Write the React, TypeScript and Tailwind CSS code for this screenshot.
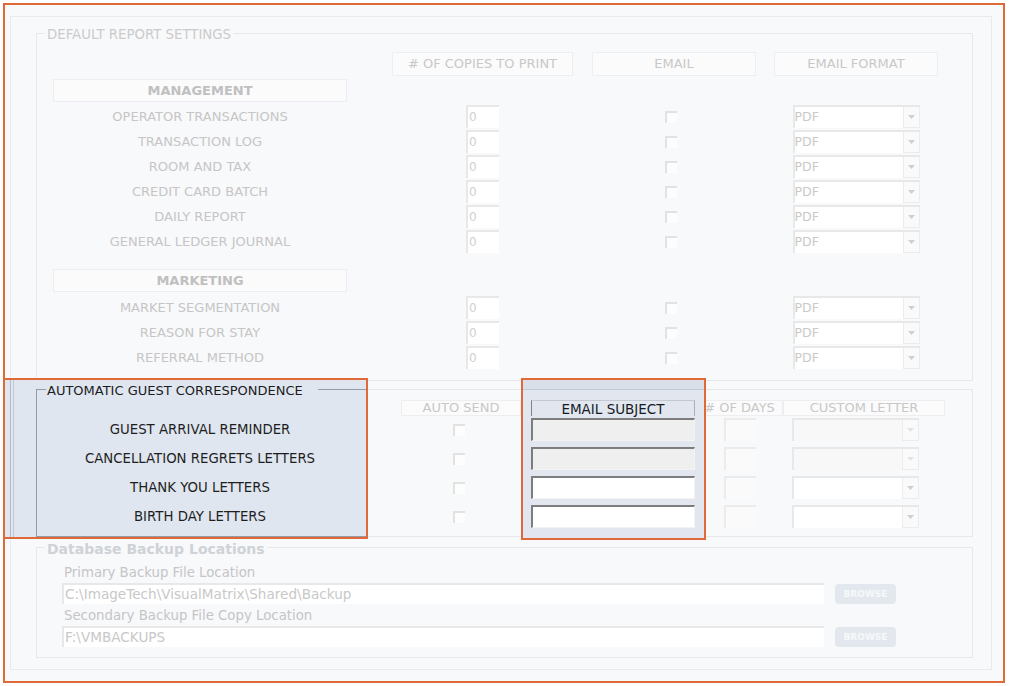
import React from 'react';

const management = [
  'OPERATOR TRANSACTIONS',
  'TRANSACTION LOG',
  'ROOM AND TAX',
  'CREDIT CARD BATCH',
  'DAILY REPORT',
  'GENERAL LEDGER JOURNAL',
];
const marketing = ['MARKET SEGMENTATION', 'REASON FOR STAY', 'REFERRAL METHOD'];
const letters = [
  { label: 'GUEST ARRIVAL REMINDER', disabled: true },
  { label: 'CANCELLATION REGRETS LETTERS', disabled: true },
  { label: 'THANK YOU LETTERS', disabled: false },
  { label: 'BIRTH DAY LETTERS', disabled: false },
];

const Arrow = ({ color }: { color: string }) => (
  <svg width="7" height="4" viewBox="0 0 7 4">
    <path d="M0 0h7L3.5 4z" fill={color} />
  </svg>
);

const FadedCheck = () => <div className="w-[12px] h-[12px] border-t-2 border-l-2 border-[#e2e2e2] bg-[#fdfdfd]" />;

const NumBox = ({ value }: { value?: string }) => (
  <div className="w-[33px] h-[23px] bg-white border-t-2 border-l-2 border-[#e8e8e8] pl-[1px] text-[12px] leading-[20px] text-[#d0d0d0]">
    {value}
  </div>
);

const FadedSelect = ({ value, disabled }: { value?: string; disabled?: boolean }) => (
  <div
    className={`w-[127px] h-[23px] flex border-t-2 border-l-2 border-[#e8e8e8] ${disabled ? 'bg-[#f8f8f8]' : 'bg-white'}`}
  >
    <span className="flex-1 text-[12.5px] leading-[20px] text-[#c9c9c9]">{value}</span>
    <span className="w-[17px] flex items-center justify-center border-l border-r border-b border-[#ececec] bg-[#fafafa]">
      <Arrow color={disabled ? '#e3e3e3' : '#cfcfcf'} />
    </span>
  </div>
);

const ColHeader = ({ className, children }: { className: string; children: React.ReactNode }) => (
  <div className={`flex items-center justify-center border border-[#eceef1] bg-[#fbfbfc] text-[#c8c8c8] ${className}`}>
    {children}
  </div>
);

const ReportRow = ({ label }: { label: string }) => (
  <div className="flex h-[23px] items-center">
    <div className="w-[294px] text-center text-[#c6c6c6]">{label}</div>
    <div className="ml-[45px] w-[181px] flex justify-center">
      <NumBox value="0" />
    </div>
    <div className="ml-[19px] w-[164px] flex justify-center pr-[6px]">
      <FadedCheck />
    </div>
    <div className="ml-[18px] w-[164px] flex justify-center">
      <FadedSelect value="PDF" />
    </div>
  </div>
);

const Legend = ({ className, children }: { className: string; children: React.ReactNode }) => (
  <div className={`-mt-[7px] ml-[8px] px-[2px] w-fit h-[16px] leading-4 ${className}`}>{children}</div>
);

export default function App() {
  return (
    <div className="relative w-[1009px] h-[686px] bg-white overflow-hidden font-['DejaVu_Sans',sans-serif] text-[13px] leading-4">
      <div className="ml-[3px] mt-[3px] w-[1002px] h-[680px] border-2 border-[#e0693a] bg-[#f8f9fb]">
        <div className="ml-[5px] mt-[11px] w-[982px] h-[654px] border border-[#e8eaed] pl-[25px] pt-[16px]">
          {/* default report settings */}
          <div className="w-[937px] h-[348px] border border-[#e6e8eb]">
            <Legend className="bg-[#f8f9fb] text-[13.3px] text-[#cbcbcb]">DEFAULT REPORT SETTINGS</Legend>
            <div className="pl-[16px]">
              <div className="flex mt-[9px] h-[24px]">
                <div className="w-[294px]" />
                <ColHeader className="ml-[45px] w-[181px]"># OF COPIES TO PRINT</ColHeader>
                <ColHeader className="ml-[19px] w-[164px]">EMAIL</ColHeader>
                <ColHeader className="ml-[18px] w-[164px]">EMAIL FORMAT</ColHeader>
              </div>
              <ColHeader className="mt-[3px] w-[294px] h-[23px] font-bold !text-[#c0c0c0]">MANAGEMENT</ColHeader>
              <div className="mt-[3px] flex flex-col gap-[2px]">
                {management.map((m) => (
                  <ReportRow key={m} label={m} />
                ))}
              </div>
              <ColHeader className="mt-[16px] w-[294px] h-[23px] font-bold !text-[#c0c0c0]">MARKETING</ColHeader>
              <div className="mt-[4px] flex flex-col gap-[2px]">
                {marketing.map((m) => (
                  <ReportRow key={m} label={m} />
                ))}
              </div>
            </div>
          </div>

          {/* automatic guest correspondence */}
          <div className="mt-[8px] w-[937px] h-[148px] border border-[#e6e8eb]">
            <Legend className="relative z-[2] text-[13px] text-[#1c1c1c]">AUTOMATIC GUEST CORRESPONDENCE</Legend>
            <div className="pl-[16px]">
              <div className="flex mt-[1px] h-[16px]">
                <div className="w-[294px]" />
                <ColHeader className="ml-[54px] w-[120px]">AUTO SEND</ColHeader>
                <div className="relative z-[2] ml-[10px] w-[164px] flex items-center justify-center border-l border-l-[#7f848c] border-t border-t-[#c3c9d2] border-r border-r-[#a9afb8] text-[13.5px] text-[#161a28]">
                  EMAIL SUBJECT
                </div>
                <ColHeader className="ml-[1px] w-[87px]"># OF DAYS</ColHeader>
                <ColHeader className="w-[162px]">CUSTOM LETTER</ColHeader>
              </div>
              <div className="mt-[2px] flex flex-col gap-[6px]">
                {letters.map((l) => (
                  <div key={l.label} className="flex h-[23px] items-center">
                    <div className="relative z-[2] w-[294px] text-center text-[13.3px] text-[#1e1e1e]">{l.label}</div>
                    <div className="ml-[54px] w-[120px] flex justify-center pr-[4px]">
                      <FadedCheck />
                    </div>
                    <div
                      className={`relative z-[2] ml-[10px] w-[164px] h-[23px] border-t-2 border-l-2 border-[#7d7d7d] border-b border-r border-b-[#f3f3f3] border-r-[#f3f3f3] ${
                        l.disabled ? 'bg-[#efefef]' : 'bg-white'
                      }`}
                    />
                    <div className="ml-[1px] w-[87px] flex justify-center">
                      <div className="w-[32px] h-[23px] border-t-2 border-l-2 border-[#ebebeb] bg-[#fafafa]" />
                    </div>
                    <div className="w-[162px] pl-[9px]">
                      <FadedSelect disabled={l.disabled} />
                    </div>
                  </div>
                ))}
              </div>
            </div>
          </div>

          {/* database backup */}
          <div className="mt-[10px] w-[937px] h-[111px] border border-[#e6e8eb]">
            <Legend className="bg-[#f8f9fb] font-bold text-[14px] text-[#cfd2d6]">Database Backup Locations</Legend>
            <div className="pl-[25px] text-[13.3px]">
              <div className="mt-[8px] ml-[2px] text-[#c5c5c5]">Primary Backup File Location</div>
              <div className="mt-[2px] flex items-center">
                <div className="w-[762px] h-[21px] bg-white border-t-2 border-l-2 border-[#e8e8e8] pl-[1px] text-[13.6px] leading-[19px] text-[#c8c8c8]">
                  C:\ImageTech\VisualMatrix\Shared\Backup
                </div>
                <button className="ml-[11px] w-[61px] h-[20px] rounded-[4px] bg-[#e3e8ee] text-[9px] font-bold text-[#f6f8fa]">
                  BROWSE
                </button>
              </div>
              <div className="mt-[4px] ml-[2px] text-[#c5c5c5]">Secondary Backup File Copy Location</div>
              <div className="mt-[2px] flex items-center">
                <div className="w-[762px] h-[21px] bg-white border-t-2 border-l-2 border-[#e8e8e8] pl-[1px] text-[13.6px] leading-[19px] text-[#c8c8c8]">
                  F:\VMBACKUPS
                </div>
                <button className="ml-[11px] w-[61px] h-[20px] rounded-[4px] bg-[#e3e8ee] text-[9px] font-bold text-[#f6f8fa]">
                  BROWSE
                </button>
              </div>
            </div>
          </div>
        </div>
      </div>

      {/* callout: correspondence labels */}
      <div className="absolute left-[3px] top-[378px] w-[365px] h-[161px] border-2 border-[#e0693a] bg-[#dfe6f0] z-[1]">
        <div className="absolute left-[5px] top-0 bottom-0 w-px bg-[#b3bac4]" />
        <div className="absolute left-[8px] top-0 bottom-0 w-px bg-[#c3c9d2]" />
        <div className="absolute left-[31px] top-[9px] right-0 h-[148px] border-l border-b border-[#959ba4]" />
        <div className="absolute left-[31px] top-[9px] w-[10px] h-px bg-[#959ba4]" />
        <div className="absolute left-[313px] top-[9px] right-0 h-px bg-[#959ba4]" />
      </div>

      {/* callout: email subject */}
      <div className="absolute left-[521px] top-[378px] w-[185px] h-[162px] border-2 border-[#e0693a] bg-[#e2e7ef] z-[1]">
        <div className="h-[9px] bg-[#dae0e9]" />
        <div className="h-px bg-[#c2c9d3]" />
      </div>
    </div>
  );
}
